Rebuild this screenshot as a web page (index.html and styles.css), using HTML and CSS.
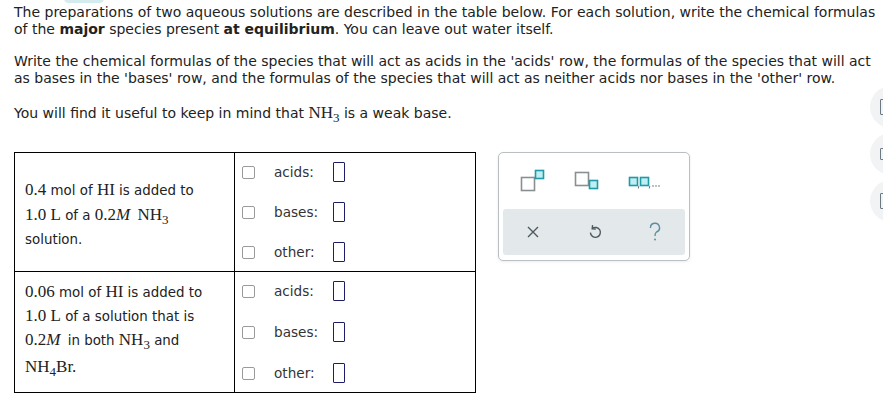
FILE: index.html
```html
<!DOCTYPE html>
<html>
<head>
<meta charset="utf-8">
<link rel="stylesheet" href="styles.css">
</head>
<body>
<div class="tab-hint"></div>
<div class="page">
  <p class="p1">The preparations of two aqueous solutions are described in the table below. For each solution, write the chemical formulas of the <b>major</b> species present <b>at equilibrium</b>. You can leave out water itself.</p>
  <p class="p2">Write the chemical formulas of the species that will act as acids in the 'acids' row, the formulas of the species that will act as bases in the 'bases' row, and the formulas of the species that will act as neither acids nor bases in the 'other' row.</p>
  <p class="p3">You will find it useful to keep in mind that <span class="m">NH<sub>3</sub></span> is a weak base.</p>

  <div class="work">
    <div class="grid">
      <div class="desc d1">
        <div class="ln"><span class="m">0.4</span> mol of <span class="m">HI</span> is added to</div>
        <div class="ln"><span class="m">1.0 L</span> of a <span class="m">0.2<i>M</i> NH<sub>3</sub></span></div>
        <div class="ln">solution.</div>
      </div>
      <div class="ans">
        <div class="arow"><span class="cb"></span><span class="lbl">acids:</span><span class="box"></span></div>
        <div class="arow"><span class="cb"></span><span class="lbl">bases:</span><span class="box"></span></div>
        <div class="arow"><span class="cb"></span><span class="lbl">other:</span><span class="box"></span></div>
      </div>
      <div class="desc d2">
        <div class="ln"><span class="m">0.06</span> mol of <span class="m">HI</span> is added to</div>
        <div class="ln"><span class="m">1.0 L</span> of a solution that is</div>
        <div class="ln"><span class="m">0.2<i>M</i></span> in both <span class="m">NH<sub>3</sub></span> and</div>
        <div class="ln"><span class="m">NH<sub>4</sub>Br.</span></div>
      </div>
      <div class="ans">
        <div class="arow"><span class="cb"></span><span class="lbl">acids:</span><span class="box"></span></div>
        <div class="arow"><span class="cb"></span><span class="lbl">bases:</span><span class="box"></span></div>
        <div class="arow"><span class="cb"></span><span class="lbl">other:</span><span class="box"></span></div>
      </div>
    </div>

    <div class="panel">
      <div class="tools">
        <svg class="ic" width="30" height="30" viewBox="0 0 30 30">
          <rect x="5.5" y="10.5" width="13" height="13" fill="#fff" stroke="#8a8f92" stroke-width="1.6"/>
          <rect x="19.5" y="3.5" width="8" height="8" fill="#bfeef3" stroke="#1f9aa6" stroke-width="1.6"/>
        </svg>
        <svg class="ic" width="30" height="30" viewBox="0 0 30 30">
          <rect x="3.5" y="5.5" width="13" height="13" fill="#fff" stroke="#8a8f92" stroke-width="1.6"/>
          <rect x="17.5" y="13.5" width="8" height="8" fill="#bfeef3" stroke="#1f9aa6" stroke-width="1.6"/>
        </svg>
        <svg class="ic" width="44" height="30" viewBox="0 0 44 30">
          <rect x="1.5" y="10.5" width="8" height="8" fill="#bfeef3" stroke="#1f9aa6" stroke-width="1.6"/>
          <rect x="12.5" y="10.5" width="8" height="8" fill="#bfeef3" stroke="#1f9aa6" stroke-width="1.6"/>
          <path d="M10.8 19 L10.3 21.5 M21.8 19 L21.3 21.5" stroke="#6b7377" stroke-width="1"/>
          <circle cx="25" cy="19" r="0.8" fill="#6b7377"/>
          <circle cx="28" cy="19" r="0.8" fill="#6b7377"/>
          <circle cx="31" cy="19" r="0.8" fill="#6b7377"/>
        </svg>
      </div>
      <div class="actions">
        <svg width="16" height="16" viewBox="0 0 16 16"><path d="M3 3 L13 13 M13 3 L3 13" stroke="#4f5a60" stroke-width="1.4" fill="none"/></svg>
        <svg width="16" height="18" viewBox="0 0 16 18"><path d="M5.2 5.5 A5 5 0 1 1 3.4 9.6" stroke="#4f5a60" stroke-width="1.4" fill="none"/><path d="M5.6 2.2 L5.2 5.8 L8.8 6" stroke="#4f5a60" stroke-width="1.4" fill="none"/></svg>
        <svg width="14" height="20" viewBox="0 0 14 20"><path d="M2.5 6 A4.5 4.5 0 1 1 8.5 10 C7 10.8 7 12 7 14" stroke="#5d8fa3" stroke-width="1.4" fill="none"/><circle cx="7" cy="17.5" r="1" fill="#5d8fa3"/></svg>
      </div>
    </div>
  </div>
</div>

<div class="side">
  <div class="sbtn"><span class="sq tall"></span></div>
  <div class="sbtn"><span class="sq"></span></div>
  <div class="sbtn"><span class="sq tall"></span></div>
</div>
</body>
</html>
```

FILE: styles.css
```css
html, body {
  margin: 0;
  padding: 0;
  background: #fff;
}
body {
  font-family: Verdana, "DejaVu Sans", sans-serif;
  font-size: 14px;
  color: #222;
  position: relative;
  width: 883px;
  height: 407px;
  overflow: hidden;
}
.tab-hint {
  position: absolute;
  left: 64px;
  top: -6px;
  width: 40px;
  height: 9px;
  border-radius: 5px;
  background: #d4ecee;
}
.page {
  padding: 4px 0 0 14px;
}
p {
  margin: 0;
  line-height: 17px;
}
.p2 {
  margin-top: 15px;
}
.p3 {
  margin-top: 16px;
  line-height: 20px;
}
.m {
  font-family: "Liberation Serif", "Times New Roman", serif;
  font-size: 17px;
}
.m sub {
  font-size: 13px;
  vertical-align: -4px;
  line-height: 0;
}
.m i {
  margin-right: 3px;
}
.work {
  display: flex;
  align-items: flex-start;
  gap: 22px;
  margin-top: 29px;
}
.grid {
  display: grid;
  grid-template-columns: 220px 240px;
  grid-template-rows: 119px 120px;
  border: 1px solid #000;
  width: 460px;
}
.desc {
  border-right: 1px solid #000;
  padding-left: 10px;
  display: flex;
  flex-direction: column;
  justify-content: center;
  font-size: 13.4px;
}
.d1 {
  border-bottom: 1px solid #000;
  padding-top: 4px;
}
.d1 .ln { height: 25px; line-height: 25px; }
.d2 .ln { height: 24px; line-height: 24px; }
.d2 .ln:last-child { height: 30px; line-height: 30px; }
.d2 { justify-content: flex-start; padding-top: 8px; }
.ans {
  display: flex;
  flex-direction: column;
  justify-content: space-between;
  padding: 9px 0 9px 7px;
}
.ans:nth-child(2) {
  border-bottom: 1px solid #000;
}
.arow {
  display: flex;
  align-items: center;
  height: 20px;
}
.cb {
  width: 11px;
  height: 11px;
  border: 1px solid #9a9a9a;
  border-radius: 2px;
  margin-right: 19px;
}
.lbl {
  width: 59px;
  font-size: 13.6px;
  color: #333;
}
.box {
  width: 10px;
  height: 18px;
  border: 1px solid #1d1d6b;
  border-radius: 1px;
}
.panel {
  width: 182px;
  height: 102px;
  border: 1px solid #b9bfc2;
  border-radius: 5px;
  box-shadow: 0 1px 3px rgba(0,0,0,0.08);
  padding: 0 4px 5px;
  display: flex;
  flex-direction: column;
}
.tools {
  height: 54px;
  display: flex;
  align-items: center;
  justify-content: space-around;
  padding-top: 2px;
}
.actions {
  flex: 1;
  background: #e3e8ea;
  border-radius: 3px;
  display: flex;
  align-items: center;
  justify-content: space-between;
  padding: 0 23px 0 22px;
}
.side {
  position: absolute;
  right: -29px;
  top: 86px;
  display: flex;
  flex-direction: column;
  gap: 5px;
}
.sbtn {
  width: 42px;
  height: 42px;
  border-radius: 50%;
  background: #f1f3f4;
  display: flex;
  align-items: center;
  padding-left: 10px;
  box-sizing: border-box;
}
.sq {
  width: 8px;
  height: 10px;
  border: 1.5px solid #6b7a80;
  border-radius: 1px;
}
.sq.tall {
  height: 14px;
}
```
